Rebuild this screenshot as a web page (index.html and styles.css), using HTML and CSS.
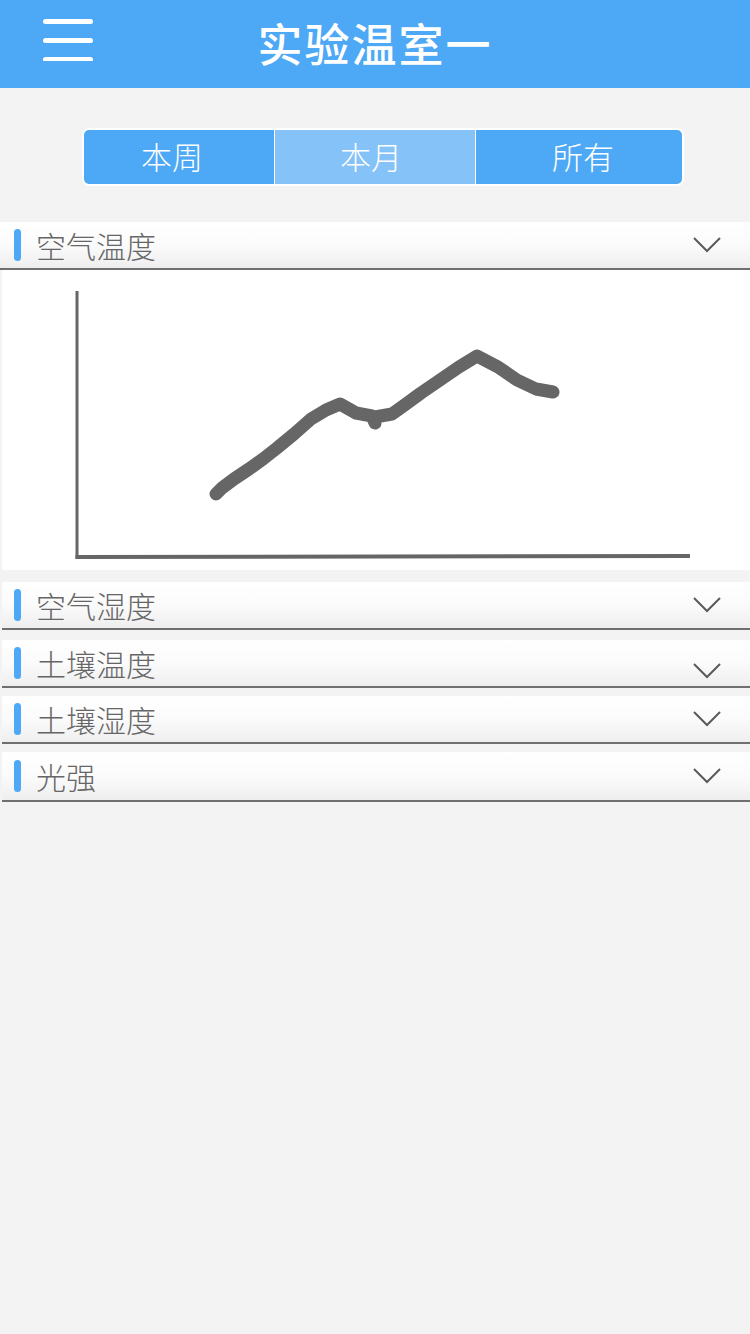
FILE: index.html
```html
<!DOCTYPE html>
<html lang="zh">
<head>
<meta charset="utf-8">
<title>实验温室一</title>
<link rel="stylesheet" href="styles.css">
</head>
<body>
<header class="topbar">
  <svg class="menu" width="50" height="48" viewBox="43 10 50 48">
    <g stroke="#fff" stroke-width="5" stroke-linecap="round">
      <line x1="45.5" y1="18.5" x2="90.5" y2="18.5"/>
      <line x1="45.5" y1="37.5" x2="90.5" y2="37.5"/>
      <line x1="45.5" y1="56.5" x2="90.5" y2="56.5"/>
    </g>
  </svg>
  <h1 class="title">实验温室一</h1>
  <span class="spacer"></span>
</header>

<div class="tabs">
  <div class="tab t1">本周</div>
  <div class="tab t2 active">本月</div>
  <div class="tab t3">所有</div>
</div>

<section class="panel first">
  <div class="panel-head">
    <span class="mark"></span>
    <span class="label">空气温度</span>
    <svg class="chev" width="28" height="16" viewBox="0 0 28 16"><polyline points="1,1 14,14 27,1" fill="none" stroke="#5a5a5a" stroke-width="2"/></svg>
  </div>
  <div class="chart">
    <svg width="748" height="300" viewBox="2 270 748 300">
      <line x1="77" y1="291" x2="77" y2="559" stroke="#666" stroke-width="3"/>
      <line x1="75.5" y1="557" x2="690" y2="556" stroke="#666" stroke-width="4"/>
      <path d="M216 494 L222 488 L234 479 L249 469 L263 459 L277 448 L294 434 L311 419 L326 410 L340 404 L356 413 L372 416 L375 423 L375 417 L392 414 L406 404 L421 393 L440 380 L459 367 L477 356 L498 367 L517 380 L536 389 L553 392" fill="none" stroke="#666" stroke-width="13" stroke-linecap="round" stroke-linejoin="round"/>
    </svg>
  </div>
</section>

<section class="panel sub p2">
  <div class="panel-head">
    <span class="mark"></span>
    <span class="label">空气湿度</span>
    <svg class="chev" width="28" height="16" viewBox="0 0 28 16"><polyline points="1,1 14,14 27,1" fill="none" stroke="#5a5a5a" stroke-width="2"/></svg>
  </div>
</section>

<section class="panel sub p3">
  <div class="panel-head">
    <span class="mark"></span>
    <span class="label">土壤温度</span>
    <svg class="chev low" width="28" height="16" viewBox="0 0 28 16"><polyline points="1,1 14,14 27,1" fill="none" stroke="#5a5a5a" stroke-width="2"/></svg>
  </div>
</section>

<section class="panel sub p4">
  <div class="panel-head">
    <span class="mark"></span>
    <span class="label">土壤湿度</span>
    <svg class="chev" width="28" height="16" viewBox="0 0 28 16"><polyline points="1,1 14,14 27,1" fill="none" stroke="#5a5a5a" stroke-width="2"/></svg>
  </div>
</section>

<section class="panel sub p5">
  <div class="panel-head">
    <span class="mark"></span>
    <span class="label">光强</span>
    <svg class="chev" width="28" height="16" viewBox="0 0 28 16"><polyline points="1,1 14,14 27,1" fill="none" stroke="#5a5a5a" stroke-width="2"/></svg>
  </div>
</section>
</body>
</html>
```

FILE: styles.css
```css
html, body {
  margin: 0;
  padding: 0;
}
body {
  width: 750px;
  min-height: 1334px;
  background: #f3f3f3;
  font-family: "Noto Sans CJK SC", "Noto Sans", sans-serif;
}
.topbar {
  height: 88px;
  background: #4da8f6;
  display: flex;
  align-items: center;
  padding: 0 43px;
  box-sizing: border-box;
}
.menu {
  display: block;
  width: 50px;
  height: 48px;
  margin-top: -14px;
  flex: none;
}
.title {
  flex: 1;
  margin: 0;
  text-align: center;
  color: #fff;
  font-size: 45px;
  font-weight: 500;
  letter-spacing: 2px;
  line-height: 1;
  margin-top: -4px;
}
.spacer {
  width: 50px;
  flex: none;
}
.tabs {
  margin: 40px 0 0 82px;
  width: 602px;
  height: 58px;
  box-sizing: border-box;
  border: 2px solid #fff;
  border-radius: 7px;
  background: #fff;
  display: grid;
  grid-template-columns: 190px 200px 206px;
  column-gap: 1px;
  overflow: hidden;
}
.tab {
  background: #4da8f6;
  color: #fff;
  font-size: 31px;
  font-weight: 300;
  display: flex;
  align-items: center;
  justify-content: center;
  line-height: 1;
  padding-bottom: 4px;
}
.tab.t1 { padding-right: 14px; }
.tab.t2 { padding-right: 8px; }
.tab.t3 { padding-left: 8px; }
.tab.active {
  background: #84c2f8;
}
.panel {
  display: flex;
  flex-direction: column;
}
.panel.first {
  margin-top: 36px;
}
.panel.sub { padding-left: 2px; }
.panel.p2 { margin-top: 12px; }
.panel.p3 { margin-top: 10px; }
.panel.p4 { margin-top: 8px; }
.panel.p5 { margin-top: 8px; }
.panel-head {
  height: 46px;
  background: linear-gradient(#ffffff 0%, #fbfbfb 50%, #eeeeee 100%);
  border-bottom: 2px solid #6f6f6f;
  display: flex;
  align-items: center;
  padding: 0 29px 0 14px;
}
.panel.sub .panel-head {
  padding-left: 12px;
}
.panel.p5 .panel-head {
  height: 48px;
}
.mark {
  width: 7px;
  height: 32px;
  border-radius: 4px;
  background: #4da8f6;
  flex: none;
}
.label {
  margin-left: 15px;
  font-size: 30px;
  font-weight: 300;
  color: #666;
  line-height: 1;
  flex: 1;
}
.chev {
  display: block;
  flex: none;
}
.chev.low {
  margin-top: 16px;
}
.chart {
  margin-left: 2px;
  height: 300px;
  background: #fff;
}
.chart svg {
  display: block;
}
```
